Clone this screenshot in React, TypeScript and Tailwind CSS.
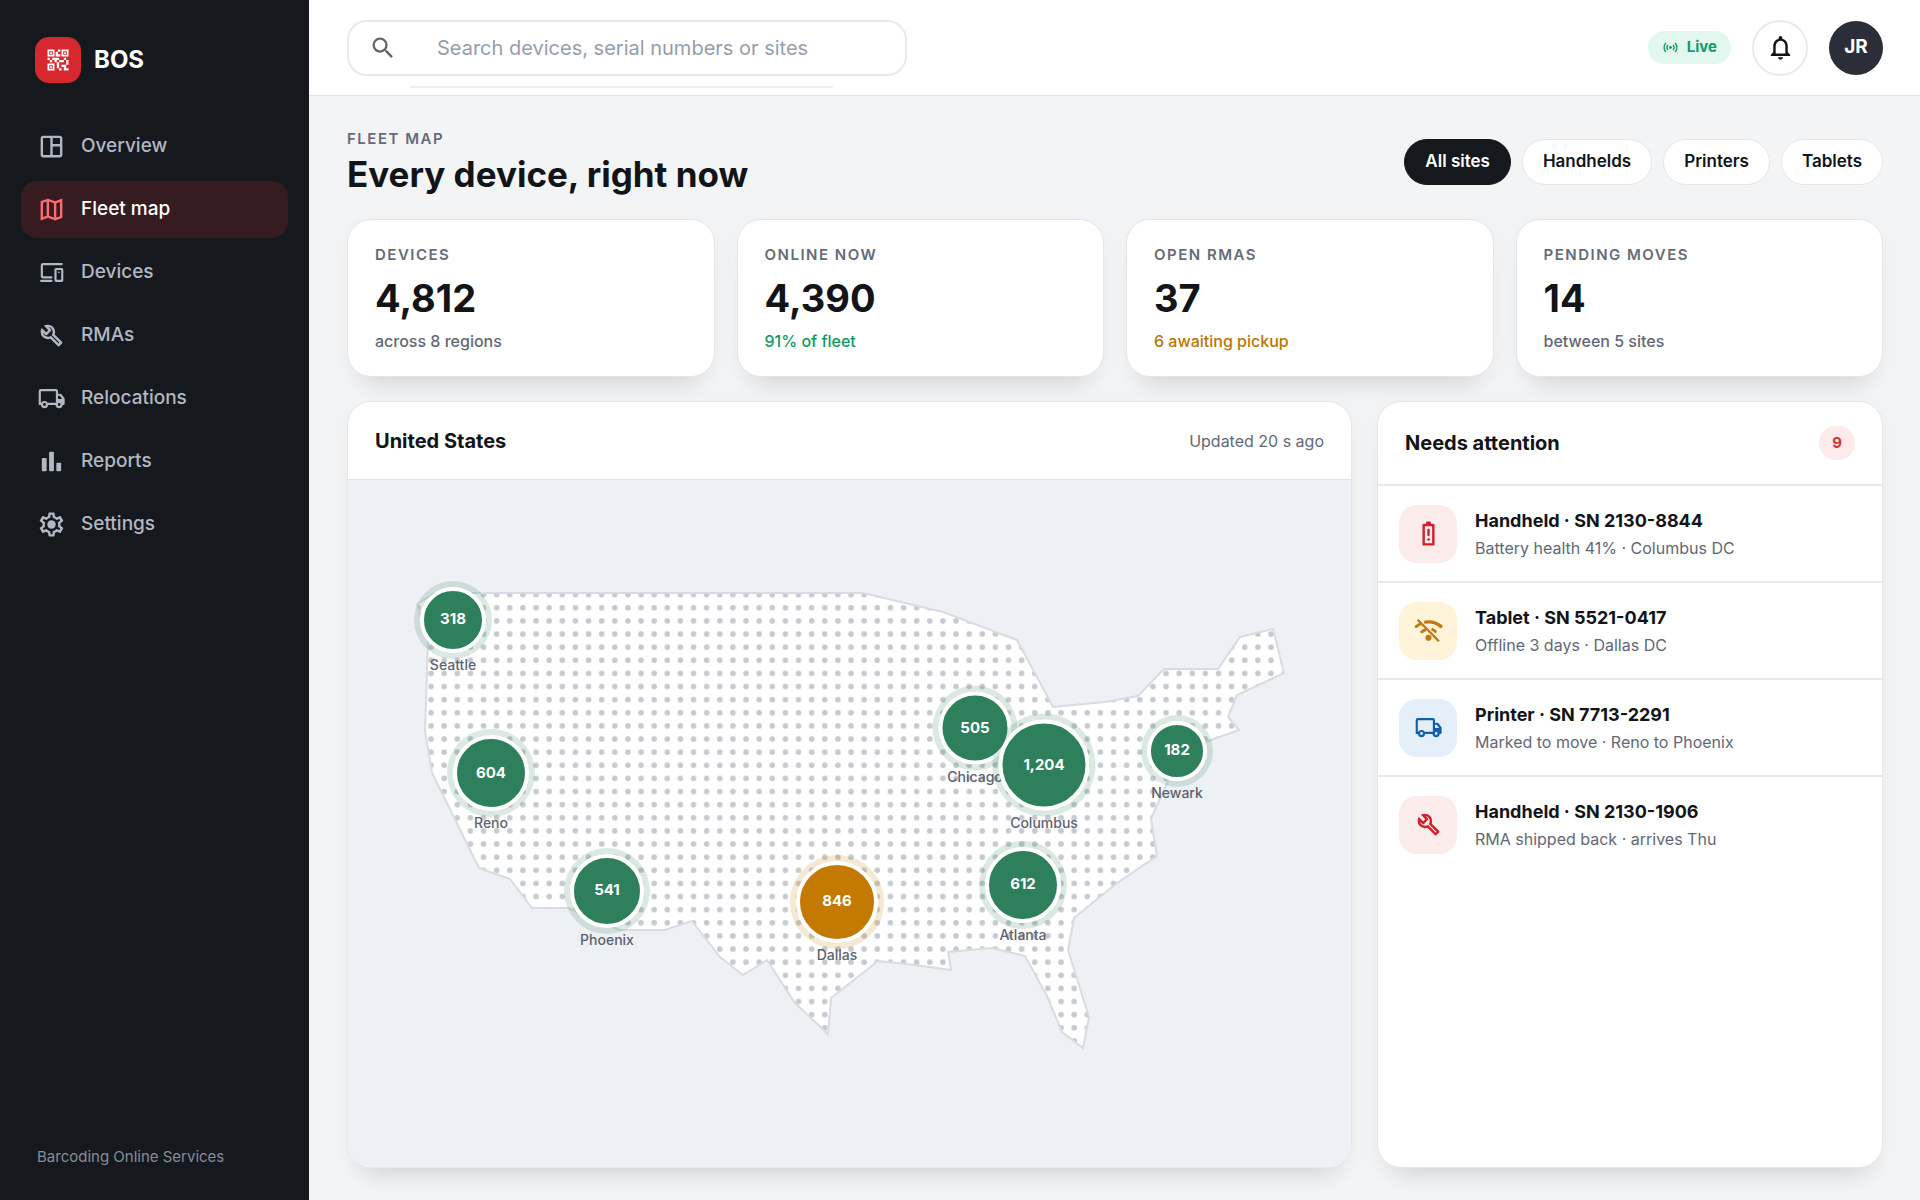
import type { ReactNode } from "react";
import { clsx } from "clsx";
import {
  MdNotificationsNone,
  MdOutlineMap,
  MdOutlineSpaceDashboard,
  MdQrCode2,
  MdSearch,
  MdSensors,
} from "react-icons/md";

type Tone = "red" | "amber" | "blue";

interface Site {
  name: string;
  count: string;
  x: number;
  y: number;
  size: number;
  warn?: boolean;
}

interface Alert {
  title: string;
  detail: string;
  tone: Tone;
  icon: ReactNode;
}

const MAP_WIDTH = 1003;
const MAP_HEIGHT = 686;

function GearIcon() {
  return (
    <svg viewBox="0 0 24 24" className="size-[29px]" fill="currentColor" aria-hidden="true">
      <path d="M19.43 12.98c.04-.32.07-.64.07-.98 0-.34-.03-.66-.07-.98l2.11-1.65c.19-.15.24-.42.12-.64l-2-3.46c-.09-.16-.26-.25-.44-.25-.06 0-.12.01-.17.03l-2.49 1c-.52-.4-1.08-.73-1.69-.98l-.38-2.65C14.46 2.18 14.25 2 14 2h-4c-.25 0-.46.18-.49.42l-.38 2.65c-.61.25-1.17.59-1.69.98l-2.49-1c-.06-.02-.12-.03-.18-.03-.17 0-.34.09-.43.25l-2 3.46c-.13.22-.07.49.12.64l2.11 1.65c-.04.32-.07.65-.07.98 0 .33.03.66.07.98l-2.11 1.65c-.19.15-.24.42-.12.64l2 3.46c.09.16.26.25.44.25.06 0 .12-.01.17-.03l2.49-1c.52.4 1.08.73 1.69.98l.38 2.65c.03.24.24.42.49.42h4c.25 0 .46-.18.49-.42l.38-2.65c.61-.25 1.17-.59 1.69-.98l2.49 1c.06.02.12.03.18.03.17 0 .34-.09.43-.25l2-3.46c.12-.22.07-.49-.12-.64l-2.11-1.65zm-1.98-1.71c.04.31.05.52.05.73 0 .21-.02.43-.05.73l-.14 1.13.89.7 1.08.84-.7 1.21-1.27-.51-1.04-.42-.9.68c-.43.32-.84.56-1.25.73l-1.06.43-.16 1.13-.2 1.35h-1.4l-.19-1.35-.16-1.13-1.06-.43c-.43-.18-.83-.41-1.23-.71l-.91-.7-1.06.43-1.27.51-.7-1.21 1.08-.84.89-.7-.14-1.13c-.03-.31-.05-.54-.05-.74s.02-.43.05-.73l.14-1.13-.89-.7-1.08-.84.7-1.21 1.27.51 1.04.42.9-.68c.43-.32.84-.56 1.25-.73l1.06-.43.16-1.13.2-1.35h1.39l.19 1.35.16 1.13 1.06.43c.43.18.83.41 1.23.71l.91.7 1.06-.43 1.27-.51.7 1.21-1.07.85-.89.7.14 1.13z" />
      <circle cx="12" cy="12" r="3.5" />
    </svg>
  );
}

function BarsIcon() {
  return (
    <svg viewBox="0 0 24 24" className="size-[29px]" fill="currentColor" aria-hidden="true">
      <rect x="4" y="9" width="4" height="11" rx="0.8" />
      <rect x="10" y="4" width="4" height="16" rx="0.8" />
      <rect x="16" y="13" width="4" height="7" rx="0.8" />
    </svg>
  );
}

function DevicesIcon() {
  return (
    <svg viewBox="0 0 24 24" className="size-[29px]" fill="none" stroke="currentColor" aria-hidden="true">
      <path d="M20.5 5H5a1 1 0 0 0-1 1v9a1 1 0 0 0 1 1h7" strokeWidth="1.8" strokeLinecap="round" />
      <path d="M3.4 18.9H12" strokeWidth="1.8" strokeLinecap="round" />
      <rect x="15.3" y="9.1" width="5.6" height="9.9" rx="0.6" strokeWidth="1.8" />
      <circle cx="18.1" cy="11.8" r="0.7" fill="currentColor" stroke="none" />
    </svg>
  );
}

function WrenchIcon() {
  return (
    <svg viewBox="0 -960 960 960" className="size-[29px]" fill="currentColor" aria-hidden="true">
      <path d="M686-132 444-376q-20 8-40.5 12t-43.5 4q-100 0-170-70t-70-170q0-36 10-68.5t28-61.5l146 146 72-72-146-146q29-18 61.5-28t68.5-10q100 0 170 70t70 170q0 23-4 43.5T584-516l244 242q12 12 12 29t-12 29l-84 84q-12 12-29 12t-29-12Zm29-85 27-27-256-256q18-20 26-46.5t8-53.5q0-60-38.5-104.5T386-758l74 74q12 12 12 28t-12 28L332-500q-12 12-28 12t-28-12l-74-74q9 57 53.5 95.5T360-440q26 0 52-8t47-25l256 256Z" />
    </svg>
  );
}

function TruckIcon() {
  return (
    <svg viewBox="0 0 24 24" className="size-[29px]" fill="none" stroke="currentColor" aria-hidden="true">
      <path d="M3.4 16.4H2.3V5.9a.8.8 0 0 1 .8-.8h12.6a.8.8 0 0 1 .8.8v10.5H9" strokeWidth="1.8" />
      <path d="M16.5 8.9h2.4a1 1 0 0 1 .8.4l2.3 3.1v4h-1.4" strokeWidth="1.8" strokeLinejoin="round" />
      <path d="M16.5 12.4H22v3.2h-5.5z" fill="currentColor" stroke="none" />
      <circle cx="6.2" cy="17" r="2.1" strokeWidth="1.8" />
      <circle cx="18.3" cy="17" r="2.1" strokeWidth="1.8" />
    </svg>
  );
}

function BatteryIcon() {
  return (
    <svg viewBox="0 0 24 24" className="size-[29px]" fill="currentColor" aria-hidden="true">
      <path
        fillRule="evenodd"
        d="M8 22a1 1 0 0 1-1-1V5a1 1 0 0 1 1-1h2V3a1 1 0 0 1 1-1h2a1 1 0 0 1 1 1v1h2a1 1 0 0 1 1 1v16a1 1 0 0 1-1 1zM9 20h6V6H9z"
      />
      <rect x="11" y="8" width="2" height="6" rx="0.6" />
      <circle cx="12" cy="17" r="1.1" />
    </svg>
  );
}

function WifiOffIcon() {
  return (
    <svg viewBox="0 0 24 24" className="size-[29px]" fill="none" stroke="currentColor" aria-hidden="true">
      <path d="M9.6 5.1C14 4.4 18.4 5.5 22.2 8.6" strokeWidth="2.8" strokeLinecap="round" />
      <path
        d="M1.8 8.8Q3.1 7.6 4.9 6.8M6.4 13.1Q7.6 12.1 9 11.6M15.4 11.2Q16.6 11.8 17.7 12.8"
        strokeWidth="2.4"
        strokeLinecap="round"
      />
      <path d="M3 3.1 20.6 20.9" strokeWidth="2" />
      <circle cx="12" cy="18.1" r="2.5" fill="currentColor" stroke="none" />
    </svg>
  );
}

const NAV = [
  { label: "Overview", icon: <MdOutlineSpaceDashboard className="size-[29px]" /> },
  { label: "Fleet map", icon: <MdOutlineMap className="size-[29px]" />, active: true },
  { label: "Devices", icon: <DevicesIcon /> },
  { label: "RMAs", icon: <WrenchIcon /> },
  { label: "Relocations", icon: <TruckIcon /> },
  { label: "Reports", icon: <BarsIcon /> },
  { label: "Settings", icon: <GearIcon /> },
];

const FILTERS = ["All sites", "Handhelds", "Printers", "Tablets"];

const STATS = [
  { label: "Devices", value: "4,812", note: "across 8 regions", color: "text-[#626876]" },
  { label: "Online now", value: "4,390", note: "91% of fleet", color: "text-[#0f9960]" },
  { label: "Open RMAs", value: "37", note: "6 awaiting pickup", color: "text-[#bd7500]" },
  { label: "Pending moves", value: "14", note: "between 5 sites", color: "text-[#626876]" },
];

const SITES: Site[] = [
  { name: "Seattle", count: "318", x: 105, y: 139, size: 66 },
  { name: "Reno", count: "604", x: 143, y: 293, size: 76 },
  { name: "Phoenix", count: "541", x: 259, y: 410, size: 74 },
  { name: "Dallas", count: "846", x: 489, y: 421, size: 82, warn: true },
  { name: "Chicago", count: "505", x: 627, y: 247, size: 73 },
  { name: "Columbus", count: "1,204", x: 696, y: 284, size: 91 },
  { name: "Atlanta", count: "612", x: 675, y: 404, size: 76 },
  { name: "Newark", count: "182", x: 829, y: 270, size: 60 },
];

const ALERTS: Alert[] = [
  { title: "Handheld · SN 2130-8844", detail: "Battery health 41% · Columbus DC", tone: "red", icon: <BatteryIcon /> },
  { title: "Tablet · SN 5521-0417", detail: "Offline 3 days · Dallas DC", tone: "amber", icon: <WifiOffIcon /> },
  { title: "Printer · SN 7713-2291", detail: "Marked to move · Reno to Phoenix", tone: "blue", icon: <TruckIcon /> },
  { title: "Handheld · SN 2130-1906", detail: "RMA shipped back · arrives Thu", tone: "red", icon: <WrenchIcon /> },
];

const CARD =
  "rounded-3xl border border-[#e4e6e9] bg-white shadow-[0_20px_24px_-18px_rgba(20,24,30,0.16),0_6px_28px_rgba(20,24,30,0.03)]";

function getToneColor(tone: Tone) {
  switch (tone) {
    case "red":
      return "bg-[#fcebeb] text-[#d0202e]";
    case "amber":
      return "bg-[#fff3d9] text-[#bf7a0b]";
    case "blue":
      return "bg-[#e4eff9] text-[#1160b0]";
  }
}

function Sidebar() {
  return (
    <aside className="flex w-[309px] shrink-0 flex-col bg-[#15191e] px-[21px] pt-[37px] pb-8">
      <div className="flex items-center gap-[13px] px-[14px]">
        <span className="flex size-[46px] items-center justify-center rounded-[14px] bg-[#d8282f] text-white">
          <MdQrCode2 className="size-7" />
        </span>
        <span className="text-2xl font-bold text-white">BOS</span>
      </div>
      <nav className="mt-[35px] flex flex-col gap-[6px]">
        {NAV.map((item) => (
          <a
            key={item.label}
            href="#"
            aria-current={item.active ? "page" : undefined}
            className={clsx(
              "flex h-[57px] items-center gap-[15px] rounded-2xl px-4 text-[19px] font-medium",
              item.active ? "bg-[#361b20] text-white" : "text-[#b1b7c3]",
            )}
          >
            <span className={clsx("w-[29px]", item.active && "text-[#ff6b70]")}>{item.icon}</span>
            {item.label}
          </a>
        ))}
      </nav>
      <p className="mt-auto px-4 text-[15px] leading-[22px] text-[#868c98]">Barcoding Online Services</p>
    </aside>
  );
}

function Header() {
  return (
    <header className="flex h-24 items-center justify-between border-b border-[#e1e3e6] bg-white pr-[37px] pl-[38px]">
      <label className="relative flex h-14 w-[560px] items-center rounded-[20px] border-2 border-[#e8e9eb] pl-5 text-[#5f6570]">
        <MdSearch className="size-7 shrink-0" />
        <input
          type="search"
          aria-label="Search"
          placeholder="Search devices, serial numbers or sites"
          className="ml-10 min-w-0 flex-1 bg-transparent text-xl text-[#15191e] outline-none placeholder:text-[#979daa]"
        />
        <span className="absolute top-16 left-[61px] h-0.5 w-[423px] bg-[#ededef]" />
      </label>
      <div className="flex items-center gap-[21px]">
        <span className="flex h-[33px] items-center gap-2 rounded-full bg-[#e2f7ed] px-[14px] text-[15px] font-bold text-[#0f9d66]">
          <MdSensors className="size-[17px]" />
          Live
        </span>
        <button
          type="button"
          aria-label="Notifications"
          className="flex size-14 items-center justify-center rounded-full border-2 border-[#e8e9eb] text-[#121418]"
        >
          <MdNotificationsNone className="size-[29px]" />
        </button>
        <button
          type="button"
          className="flex size-[54px] items-center justify-center rounded-full bg-[#2b2e39] text-[19px] font-bold text-white"
        >
          JR
        </button>
      </div>
    </header>
  );
}

function FleetMap() {
  return (
    <section className={clsx(CARD, "flex min-w-0 flex-col overflow-hidden")}>
      <div className="flex h-[78px] items-center justify-between border-b border-[#e1e3e6] px-[27px]">
        <h2 className="text-xl font-bold">United States</h2>
        <span className="text-base text-[#626876]">Updated 20 s ago</span>
      </div>
      <div className="flex flex-1 items-center bg-[#edf0f5]">
        <div className="relative aspect-[1003/686] w-full">
          <svg viewBox={`0 0 ${MAP_WIDTH} ${MAP_HEIGHT}`} className="size-full" aria-hidden="true">
            <defs>
              <pattern id="dots" x="142.1" y="107.1" width="13.125" height="13.125" patternUnits="userSpaceOnUse">
                <rect width="13.125" height="13.125" fill="#fff" />
                <circle cx="6.56" cy="6.56" r="2.8" fill="#c6c9d0" />
              </pattern>
            </defs>
            <path
              d="M69 123 87 112H515L595 131 669 159 705 226 757 221 790 215 816 188H870L892 156 925 148 936 192 889 214 880 236 891 249 860 260 834 270 819 302 803 338 809 375 769 402 726 437 720 469 741 536 735 567 714 551 699 515 677 475 644 467 600 471 603 489 567 484 530 480 483 517 480 553 447 522 419 479 395 494 372 476 344 440 317 449H272L220 427H184L162 398 131 387 84 292 77 250 80 160Z"
              fill="url(#dots)"
              stroke="#d8dbe1"
              strokeWidth="2"
            />
          </svg>
          {SITES.map((site) => (
            <button
              key={site.name}
              type="button"
              className="absolute -translate-x-1/2 -translate-y-1/2 text-[15px] font-bold text-white"
              style={{ left: `${(site.x / MAP_WIDTH) * 100}%`, top: `${(site.y / MAP_HEIGHT) * 100}%` }}
            >
              <span
                className={clsx(
                  "flex items-center justify-center rounded-full border-4 border-white",
                  site.warn
                    ? "bg-[#c47a00] shadow-[0_0_0_6px_rgba(196,122,0,0.17)]"
                    : "bg-[#2e7f5b] shadow-[0_0_0_6px_rgba(46,127,91,0.17)]",
                )}
                style={{ width: site.size, height: site.size }}
              >
                {site.count}
              </span>
              <span className="absolute top-full left-1/2 mt-0.5 -translate-x-1/2 text-sm font-medium text-[#5c6270]">
                {site.name}
              </span>
            </button>
          ))}
        </div>
      </div>
    </section>
  );
}

function Attention() {
  return (
    <section className={clsx(CARD, "overflow-hidden")}>
      <div className="flex h-[82px] items-center justify-between px-[27px]">
        <h2 className="text-xl font-bold">Needs attention</h2>
        <span className="flex h-[34px] w-9 items-center justify-center rounded-full bg-[#fdeaea] text-[15px] font-bold text-[#cf3535]">
          9
        </span>
      </div>
      <ul>
        {ALERTS.map((alert) => (
          <li key={alert.title} className="flex h-[97px] items-center gap-[18px] border-t-2 border-[#e8e9eb] px-[21px]">
            <span
              className={clsx(
                "flex size-[58px] shrink-0 items-center justify-center rounded-[18px]",
                getToneColor(alert.tone),
              )}
            >
              {alert.icon}
            </span>
            <div>
              <p className="text-lg leading-7 font-bold">{alert.title}</p>
              <p className="text-base leading-[26px] text-[#626876]">{alert.detail}</p>
            </div>
          </li>
        ))}
      </ul>
    </section>
  );
}

export default function App() {
  return (
    <div className="flex min-h-screen bg-[#f3f4f6] font-['Inter',sans-serif] text-[#121418]">
      <Sidebar />
      <div className="flex min-w-0 flex-1 flex-col">
        <Header />
        <main className="flex flex-1 flex-col pt-[31px] pr-[37px] pb-8 pl-[38px]">
          <div className="flex items-center justify-between">
            <div>
              <p className="text-[15px] leading-6 font-semibold tracking-widest text-[#656b79] uppercase">Fleet map</p>
              <h1 className="text-[35px] leading-[46px] font-bold">Every device, right now</h1>
            </div>
            <div className="flex gap-[11px]">
              {FILTERS.map((filter, index) => (
                <button
                  key={filter}
                  type="button"
                  aria-pressed={index === 0}
                  className={clsx(
                    "h-[46px] rounded-full border px-5 text-[17px] font-semibold",
                    index === 0 ? "border-[#15191e] bg-[#15191e] text-white" : "border-[#e4e6e9] bg-white",
                  )}
                >
                  {filter}
                </button>
              ))}
            </div>
          </div>

          <div className="mt-[22px] grid grid-cols-4 gap-[22px]">
            {STATS.map((stat) => (
              <div key={stat.label} className={clsx(CARD, "h-[158px] px-[27px] pt-[23px]")}>
                <p className="text-[15px] leading-6 font-semibold tracking-widest text-[#656b79] uppercase">
                  {stat.label}
                </p>
                <p className="mt-2 text-[38px] leading-[46px] font-bold">{stat.value}</p>
                <p className={clsx("mt-2 text-base leading-6 font-medium", stat.color)}>{stat.note}</p>
              </div>
            ))}
          </div>

          <div className="mt-6 grid flex-1 grid-cols-[minmax(0,1fr)_506px] gap-[25px]">
            <FleetMap />
            <Attention />
          </div>
        </main>
      </div>
    </div>
  );
}
